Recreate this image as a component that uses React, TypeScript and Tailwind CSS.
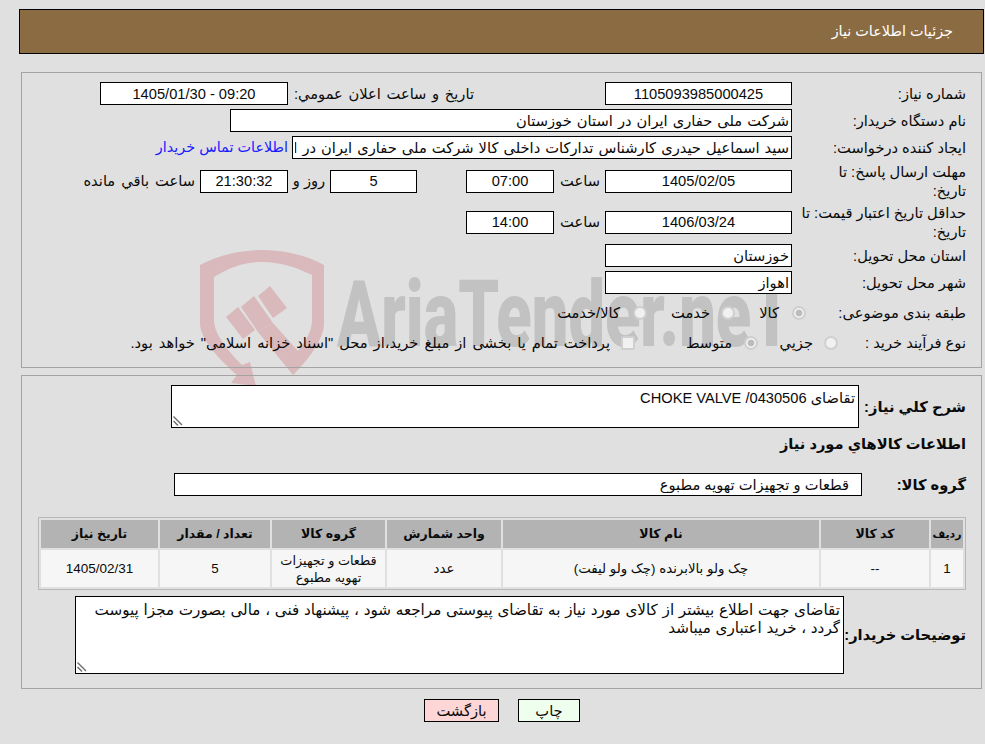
import React from 'react';

const boxClass = 'h-[23px] border border-black bg-white px-[2px] text-[14.67px] outline-none';

function Box({ value, className = '' }: { value: string; className?: string }) {
  return <input readOnly value={value} className={`${boxClass} ${className}`} />;
}

function Label({ children, className = '' }: { children: React.ReactNode; className?: string }) {
  return <div className={`shrink-0 pt-px text-[14.67px] leading-[18.5px] ${className}`}>{children}</div>;
}

function Choice({ label, width, gap, checked, type = 'radio' }: { label: string; width: string; gap: string; checked?: boolean; type?: string }) {
  const shape = type === 'radio' ? 'rounded-full' : 'rounded-[2px]';
  return (
    <div className={`flex shrink-0 items-center ${width}`}>
      <input
        type={type}
        disabled
        defaultChecked={checked}
        className={`m-0 h-[14px] w-[14px] shrink-0 appearance-none border-2 border-[#cfcfcf] bg-[#f1f1f1] checked:bg-[radial-gradient(circle,#bcbcbc_45%,#f1f1f1_52%)] ${shape}`}
      />
      <span className={`text-[14.67px] whitespace-nowrap ${gap}`}>{label}</span>
    </div>
  );
}

function ResizeGrip() {
  return (
    <svg viewBox="0 0 10 10" className="pointer-events-none absolute bottom-[2px] left-[2px] h-[10px] w-[10px]">
      <path stroke="#6a6a6a" strokeWidth="1.4" fill="none" d="M0.5 0.5 L9 9 M0.5 5 L5 9.5" />
    </svg>
  );
}

const columns = [
  { title: 'ردیف', width: 'w-[32px]', titleSize: 'text-[11px]', value: '1', size: 'text-[13.33px]' },
  { title: 'کد کالا', width: 'w-[108px]', titleSize: 'text-[12.5px]', value: '--', size: 'text-[13.33px]' },
  { title: 'نام کالا', width: 'w-[316px]', titleSize: 'text-[12.5px]', value: 'چک ولو بالابرنده (چک ولو لیفت)', size: 'text-[13.33px]' },
  { title: 'واحد شمارش', width: 'w-[114px]', titleSize: 'text-[12.5px]', value: 'عدد', size: 'text-[13.33px]' },
  { title: 'گروه کالا', width: 'w-[113px]', titleSize: 'text-[12.5px]', value: 'قطعات و تجهیزات تهویه مطبوع', size: 'text-[12.8px]' },
  { title: 'تعداد / مقدار', width: 'w-[110px]', titleSize: 'text-[12.5px]', value: '5', size: 'text-[13.33px]' },
  { title: 'تاریخ نیاز', width: 'w-[117px]', titleSize: 'text-[12.5px]', value: '1405/02/31', size: 'text-[13.5px]' },
];

function Watermark() {
  return (
    <div dir="ltr" className="pointer-events-none absolute top-0 left-0 z-0">
      <svg viewBox="0 0 150 150" className="absolute top-[245px] left-[190px] h-[150px] w-[150px]">
        <path
          fill="#d9b9bb"
          d="M10 20 C30 10 50 5 72 5 C95 5 115 10 134 20 L134 78 C134 95 118 115 103 130 L68 87 L83 78 L108 106 C116 96 122 86 122 75 L122 30 C105 22 90 17 72 17 C55 17 40 22 24 32 L24 75 C24 90 40 108 52 120 L60 117 L66 141 L41 138 L47 130 C30 115 10 95 10 78 Z"
        />
        <path fill="#d9b9bb" d="M68 51 L80 41 L97 63 L83 73 Z M51 62 L64 51 L83 78 L68 87 Z M36 72 L48 62 L65 85 L53 94 Z" />
      </svg>
      <div className="absolute top-[260px] left-[337px] origin-left scale-x-[0.706] text-[92px] leading-[110px] font-black whitespace-nowrap text-[#c2c2c2] [font-family:Roboto,sans-serif]">
        AriaTender.neT
      </div>
    </div>
  );
}

export default function App() {
  return (
    <div dir="rtl" className="relative min-h-screen overflow-hidden bg-[#e0e0e0] pt-[9px] text-[#0a0a0a] [font-family:'Liberation_Sans','DejaVu_Sans',sans-serif]">
      <Watermark />

      <div className="mr-px ml-[19px] flex h-[45px] items-center border border-black bg-[#8b6c42] pr-[30px] text-[14.4px] text-white">
        جزئیات اطلاعات نیاز
      </div>

      <div className="relative z-10 mt-[18px] mr-[3px] ml-[21px] border border-[#a3a3a3] pt-[9px] pr-[15px] pb-[13px]">
        <div className="flex items-center">
          <Label className="w-[174px]">شماره نیاز:</Label>
          <Box value="1105093985000425" className="w-[187px] text-center" />
          <Label className="ms-[131px] w-[186px] [word-spacing:1.6px]">تاریخ و ساعت اعلان عمومي:</Label>
          <Box value="09:20 - 1405/01/30" className="w-[188px] text-center" />
        </div>
        <div className="mt-1 flex items-center">
          <Label className="w-[174px]">نام دستگاه خریدار:</Label>
          <Box value="شرکت ملی حفاری ایران در استان خوزستان" className="w-[562px] [word-spacing:1px]" />
        </div>
        <div className="mt-1 flex items-center">
          <Label className="w-[174px]">ایجاد کننده درخواست:</Label>
          <Box value="سید اسماعیل حیدری کارشناس تدارکات داخلی کالا شرکت ملی حفاری ایران در استان خوزستان" className="w-[500px] [word-spacing:1px]" />
          <a className="ms-1 pt-px text-[14.4px] whitespace-nowrap text-[#1a1aff]">اطلاعات تماس خریدار</a>
        </div>
        <div className="mt-1 flex h-[36px] items-center">
          <Label className="w-[174px] whitespace-nowrap">
            مهلت ارسال پاسخ: تا
            <br />
            تاریخ:
          </Label>
          <Box value="1405/02/05" className="h-[22px] w-[187px] text-center" />
          <Label className="w-[51px] ps-[5px]">ساعت</Label>
          <Box value="07:00" className="h-[22px] w-[88px] text-center" />
          <Box value="5" className="ms-[49px] h-[22px] w-[87px] text-center" />
          <Label className="w-[42px] text-center">روز و</Label>
          <Box value="21:30:32" className="h-[22px] w-[88px] bg-[#fffff0] text-center" />
          <Label className="ms-[5px] [word-spacing:2px]">ساعت باقي مانده</Label>
        </div>
        <div className="mt-[5px] flex h-[36px] items-center">
          <Label className="w-[174px] whitespace-nowrap">
            حداقل تاریخ اعتبار قیمت: تا
            <br />
            تاریخ:
          </Label>
          <Box value="1406/03/24" className="w-[187px] text-center" />
          <Label className="w-[51px] ps-[5px]">ساعت</Label>
          <Box value="14:00" className="w-[88px] text-center" />
        </div>
        <div className="mt-1 flex items-center">
          <Label className="w-[174px]">استان محل تحویل:</Label>
          <Box value="خوزستان" className="w-[187px]" />
        </div>
        <div className="mt-1 flex items-center">
          <Label className="w-[174px]">شهر محل تحویل:</Label>
          <Box value="اهواز" className="w-[187px]" />
        </div>
        <div className="mt-2 flex h-[22px] items-center">
          <Label className="w-[160px]">طبقه بندی موضوعی:</Label>
          <Choice label="کالا" width="w-[71px]" gap="ms-[13px]" checked />
          <Choice label="خدمت" width="w-[88px]" gap="ms-[11px]" />
          <Choice label="کالا/خدمت" width="w-[100px]" gap="ms-[13px]" />
        </div>
        <div className="mt-2 flex h-[22px] items-center">
          <Label className="w-[128px]">نوع فرآیند خرید :</Label>
          <Choice label="جزيي" width="w-[80px]" gap="ms-[11px]" />
          <Choice label="متوسط" width="w-[123px]" gap="ms-[12px]" checked />
          <Choice
            label={'پرداخت تمام یا بخشی از مبلغ خرید،از محل "اسناد خزانه اسلامی" خواهد بود.'}
            width="w-[500px] [word-spacing:1.9px]"
            gap="ms-[11px]"
            type="checkbox"
          />
        </div>
      </div>

      <div className="relative z-10 mt-[7px] mr-[3px] ml-[21px] border border-[#a3a3a3] pt-[9px] pr-[15px] pb-[14px]">
        <div className="flex items-center">
          <Label className="w-[107px] font-bold">شرح کلي نياز:</Label>
          <div className="relative flex">
            <textarea
              readOnly
              value="تقاضای 0430506/ CHOKE VALVE"
              className="h-[43px] w-[688px] resize-none border border-black bg-white px-[3px] pt-[3px] text-[14.67px] leading-[18px] outline-none"
            />
            <ResizeGrip />
          </div>
        </div>
        <Label className="mt-[6px] flex h-[20px] items-center text-[14.2px] font-bold">اطلاعات کالاهاي مورد نياز</Label>
        <div className="mt-[19px] flex items-center">
          <Label className="w-[104px] font-bold">گروه کالا:</Label>
          <Box value="قطعات و تجهیزات تهویه مطبوع" className="w-[688px] pr-3" />
        </div>
        <table className="mt-[21px] w-[928px] table-fixed border-separate border-spacing-[2px] border border-[#b8b8b8]">
          <thead>
            <tr>
              {columns.map((col) => (
                <th key={col.title} className={`h-[28px] bg-[#b3b3b3] p-0 text-center font-bold ${col.titleSize} ${col.width}`}>
                  {col.title}
                </th>
              ))}
            </tr>
          </thead>
          <tbody>
            <tr>
              {columns.map((col) => (
                <td key={col.title} className={`h-[37px] bg-[#f6f6f6] px-[2px] py-0 text-center leading-[17px] ${col.size}`}>
                  {col.value}
                </td>
              ))}
            </tr>
          </tbody>
        </table>
        <div className="mt-[6px] flex items-center">
          <Label className="w-[122px] text-[14.2px] font-bold">توضیحات خریدار:</Label>
          <div className="relative flex">
            <textarea
              readOnly
              value="تقاضای جهت اطلاع بیشتر از کالای مورد نیاز به تقاضای پیوستی مراجعه شود ، پیشنهاد فنی ، مالی بصورت مجزا پیوست گردد ، خرید اعتباری میباشد"
              className="h-[78px] w-[769px] resize-none border border-black bg-white px-[3px] pt-[4px] text-[15.2px] leading-[18px] [word-spacing:0.5px] outline-none"
            />
            <ResizeGrip />
          </div>
        </div>
      </div>

      <div className="relative z-10 mt-[10px] flex gap-[19px] pr-[405px]">
        <button className="h-[23px] w-[62px] border border-black bg-[#eeffee] text-[14.67px]">چاپ</button>
        <button className="h-[23px] w-[75px] border border-black bg-[#ffd6d6] text-[14.67px]">بازگشت</button>
      </div>
    </div>
  );
}
